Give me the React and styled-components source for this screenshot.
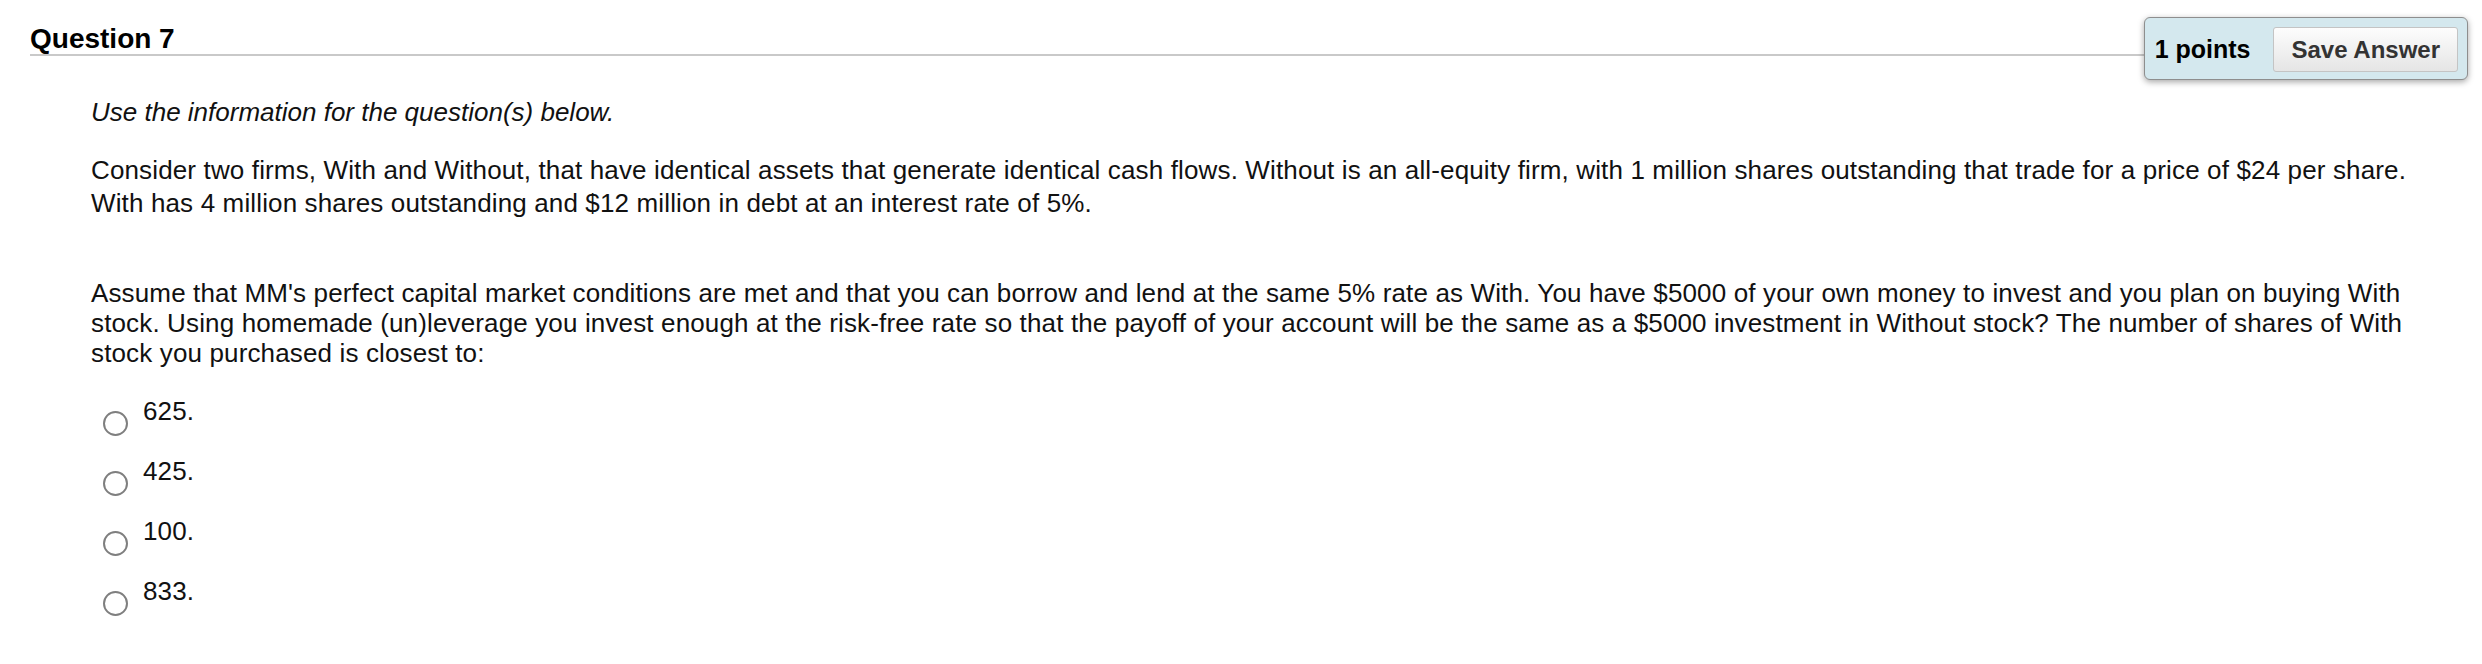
import styled, { createGlobalStyle } from "styled-components";

const GlobalStyle = createGlobalStyle`
	body {
		margin: 0;
		background: #fff;
		color: #111;
		font-family: "Liberation Sans", Helvetica, Arial, sans-serif;
	}
`;

const options = ["625.", "425.", "100.", "833."];

export default function App() {
	return (
		<>
			<GlobalStyle />
			<Page>
				<Header>
					<TitleBar>Question 7</TitleBar>
					<PointsBox>
						<Points>1 points</Points>
						<SaveButton type="button">Save Answer</SaveButton>
					</PointsBox>
				</Header>
				<Content>
					<Intro>Use the information for the question(s) below.</Intro>
					<Paragraph>
						Consider two firms, With and Without, that have identical assets that
						generate identical cash flows. Without is an all-equity firm, with 1
						million shares outstanding that trade for a price of $24 per share.
						With has 4 million shares outstanding and $12 million in debt at an
						interest rate of 5%.
					</Paragraph>
					<Question>
						Assume that MM's perfect capital market conditions are met and that you
						can borrow and lend at the same 5% rate as With. You have $5000 of your
						own money to invest and you plan on buying With stock. Using homemade
						(un)leverage you invest enough at the risk-free rate so that the payoff
						of your account will be the same as a $5000 investment in Without
						stock? The number of shares of With stock you purchased is closest to:
					</Question>
					<OptionList>
						{options.map((o) => (
							<Option key={o}>
								<Radio type="radio" name="q7" />
								<OptionLabel>{o}</OptionLabel>
							</Option>
						))}
					</OptionList>
				</Content>
			</Page>
		</>
	);
}

const Page = styled.div`
	padding: 17px 14px 0 30px;
`;

const Header = styled.div`
	display: flex;
	align-items: flex-start;
`;

const TitleBar = styled.div`
	flex: 1;
	padding-top: 6px;
	font-size: 28px;
	line-height: 31px;
	font-weight: 700;
	color: #000;
	border-bottom: 2px solid #c9c9c9;
`;

const PointsBox = styled.div`
	flex: none;
	display: flex;
	align-items: center;
	gap: 23px;
	padding: 9px 9px 7px 10px;
	background: #d4e8ee;
	border: 1px solid #8e8e8e;
	border-radius: 6px;
	box-shadow: 0 2px 6px rgba(0, 0, 0, 0.35);
`;

const Points = styled.span`
	font-size: 25px;
	font-weight: 700;
	color: #000;
`;

const SaveButton = styled.button`
	height: 45px;
	padding: 0 17px;
	font-family: inherit;
	font-size: 24px;
	font-weight: 700;
	color: #333;
	background: linear-gradient(#fdfdfd, #e5e5e5);
	border: 1px solid #c4c4c4;
	border-radius: 3px;
`;

const Content = styled.div`
	padding: 0 30px 0 61px;
	font-size: 26px;
	letter-spacing: 0.14px;
`;

const Intro = styled.p`
	margin: 17px 0 0;
	line-height: 30px;
	font-style: italic;
	letter-spacing: 0;
`;

const Paragraph = styled.p`
	margin: 27px 0 0;
	line-height: 33px;
`;

const Question = styled.p`
	margin: 58px 0 0;
	line-height: 30px;
`;

const OptionList = styled.div`
	margin-top: 28px;
`;

const Option = styled.label`
	display: flex;
	align-items: flex-start;
	height: 60px;
`;

const Radio = styled.input`
	appearance: none;
	margin: 15px 15px 0 12px;
	width: 25px;
	height: 25px;
	border: 2px solid #7f7f7f;
	border-radius: 50%;
	background: #fff;
`;

const OptionLabel = styled.span`
	line-height: 30px;
`;
